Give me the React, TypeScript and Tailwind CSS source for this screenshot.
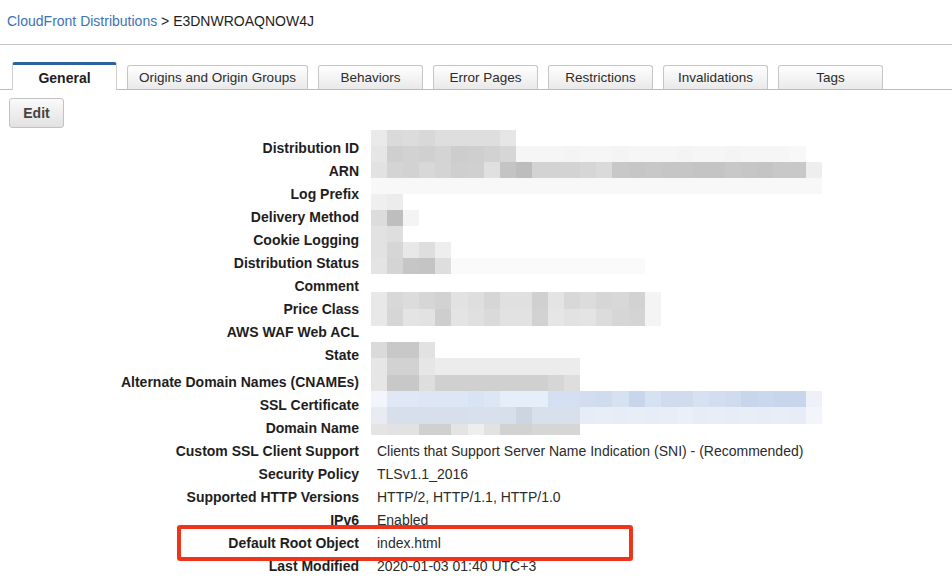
import type { ReactNode } from "react";

const FONT = "font-['Liberation_Sans',Arial,sans-serif]";

// redaction mosaic over the sensitive values (gray levels or full hex)
const MOSAIC: string[] = [
  "ea da dc d8 de de de de e6",
  "e6 cf d2 d0 d4 cd cf d2 d6 f6 f6 f6 f4 f6 f6 f4 f6 f6 f6 f4 f6 f6 f4 f6 f6 f6 f8",
  "e2 d4 d2 d8 d4 cf d0 e0 c4 bd d3 d3 d3 d6 da c8 c6 c8 c6 c6 c4 c4 c8 c6 c4 c8 c8 ee",
  "f8 f8 f8 f8 f8 f8 f8 f8 f8 f8 f8 f8 f8 f8 f8 f8 f8 f8 f8 f8 f8 f8 f8 f8 f8 f8 f8 f8",
  "ef ec",
  "dc be f4",
  "e2 de",
  "e2 d6 e8 de ee",
  "e4 d4 c6 c4 de fa fa fa fa fa fa fa fa fa fa fa fa",
  "",
  "e8 d8 dc d6 d2 e2 de d6 e0 e0 d0 e4 d8 dc d6 d8 d2 f4",
  "e8 d6 e4 e2 ce e4 e0 da e2 e2 d2 e6 e2 e4 dc d6 d4 f4",
  "",
  "da c8 c8 e2",
  "e6 d2 d2 e6 ec ec ec ec ec ec ec ec ec",
  "e6 c8 c8 de d0 d0 d0 d0 d0 d0 d0 d6 de",
  "f2f6fc dfe8f4 dfe8f4 dce6f4 dce6f4 dce6f4 d8e4f4 dce6f4 e6eefa e6eefa e6eefa d4e0f2 d4e0f2 d2def0 cfdcee d6e2f2 c8d6ec d6e2f2 d0dcee d0dcee d6e2f2 d2def0 d0dcee c8d6ec cad8ee c8d6ec c8d6ec eef2f8",
  "e8ecf2 d6dfea d6dfea d6dfea d6dfea d6dfea d8e0ec d8e0ec d6dfea ccd5e2 d8e0ec d8e0ec d8e0ec e6edf6 e8eef6 e6edf6 e8eef6 e6edf6 e8eef6 eaf0f8 e6edf6 e8eef6 e6edf6 e8eef6 e6edf6 e8eef6 e6edf6 f2f5fa",
  "e4 e2 e2 d0 d0 e4 ee e2 d2 d2 d6 d6 d6",
];
const ROW_H = [16, 16, 16, 16, 16, 16, 16, 16, 16, 18, 17, 17, 16, 16, 17, 16, 16, 17, 11];

function toColor(t: string) {
  return t.length === 2 ? `#${t}${t}${t}` : `#${t}`;
}

function Mosaic() {
  return (
    <div className="absolute left-[371px] top-[-7px] flex flex-col">
      {MOSAIC.map((row, r) => (
        <div key={r} className="flex" style={{ height: ROW_H[r] }}>
          {row
            .split(" ")
            .filter(Boolean)
            .map((t, c) => (
              <div key={c} className="w-[16.1px] h-full" style={{ background: toColor(t) }} />
            ))}
        </div>
      ))}
    </div>
  );
}

const TABS = ["Origins and Origin Groups", "Behaviors", "Error Pages", "Restrictions", "Invalidations", "Tags"];

type Row = { label: string; value?: ReactNode; tall?: boolean; boxed?: boolean };

const ROWS: Row[] = [
  { label: "Distribution ID" },
  { label: "ARN" },
  { label: "Log Prefix" },
  { label: "Delivery Method" },
  { label: "Cookie Logging" },
  { label: "Distribution Status" },
  { label: "Comment" },
  { label: "Price Class" },
  { label: "AWS WAF Web ACL" },
  { label: "State" },
  { label: "Alternate Domain Names (CNAMEs)", tall: true },
  { label: "SSL Certificate" },
  { label: "Domain Name" },
  { label: "Custom SSL Client Support", value: "Clients that Support Server Name Indication (SNI) - (Recommended)" },
  { label: "Security Policy", value: "TLSv1.1_2016" },
  { label: "Supported HTTP Versions", value: "HTTP/2, HTTP/1.1, HTTP/1.0" },
  { label: "IPv6", value: "Enabled" },
  { label: "Default Root Object", value: "index.html", boxed: true },
  { label: "Last Modified", value: "2020-01-03 01:40 UTC+3" },
];

function DetailRow({ row }: { row: Row }) {
  return (
    <div className={`relative flex items-center text-[14px] ${row.tall ? "h-[27px] pt-[4px]" : "h-[23px]"}`}>
      <div className="w-[359px] shrink-0 text-right font-bold text-[#1e1e1e]">{row.label}</div>
      <div className="pl-[18px] text-[#2b2b2b] whitespace-nowrap">{row.value}</div>
      {row.boxed && (
        <div className="absolute left-[177px] top-[-7px] w-[456px] h-[36px] rounded-[3px] border-[4px] border-[#f0341c]" />
      )}
    </div>
  );
}

export default function App() {
  return (
    <div className={`w-[952px] h-[588px] overflow-hidden bg-white ${FONT}`}>
      <div className="h-[45px] border-b border-[#c4c4c4] px-[7px] pt-[12px] text-[14px] leading-[18px]">
        <span className="text-[#3d72b4]">CloudFront Distributions</span>
        <span className="text-[#1e1e1e]"> &gt; E3DNWROAQNOW4J</span>
      </div>

      <div className="mt-[17px] flex items-end gap-[10px] pl-[12px] border-b border-[#bcbcbc] h-[28px]">
        <div className="relative -mb-px h-[28px] w-[105px] shrink-0 flex items-center justify-center pt-px rounded-t-[3px] border-t-[3px] border-t-[#2d62a0] border-x border-x-[#cfcfcf] bg-white text-[14px] font-bold text-[#1e1e1e]">
          General
        </div>
        {TABS.map((t) => (
          <div
            key={t}
            className={`h-[24px] shrink-0 flex items-center justify-center pt-[2px] rounded-t-[3px] border border-b-0 border-[#c6c6c6] bg-gradient-to-b from-white to-[#e9e9e9] text-[13.5px] text-[#2b2b2b] ${
              t === "Origins and Origin Groups" ? "w-[181px]" : "w-[105px]"
            }`}
          >
            {t}
          </div>
        ))}
      </div>

      <div className="pl-[9px] pt-[8px]">
        <button className="h-[30px] w-[55px] rounded-[3px] border border-[#c2c2c2] bg-gradient-to-b from-[#fafafa] to-[#e2e2e2] text-[14px] font-bold text-[#444]">
          Edit
        </button>
      </div>

      <div className="relative mt-[9px]">
        {ROWS.map((r) => (
          <DetailRow key={r.label} row={r} />
        ))}
        <Mosaic />
      </div>
    </div>
  );
}
